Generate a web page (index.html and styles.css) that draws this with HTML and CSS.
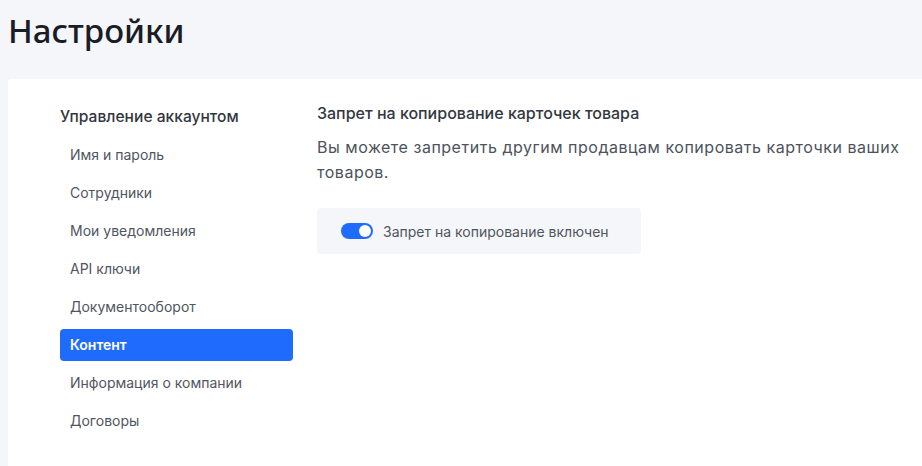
FILE: index.html
```html
<!DOCTYPE html>
<html lang="ru">
<head>
<meta charset="utf-8">
<link rel="stylesheet" href="styles.css">
</head>
<body>
<div class="page">
  <h1 class="title">Настройки</h1>
  <div class="card">
    <nav class="sidebar">
      <div class="group-title">Управление аккаунтом</div>
      <a class="nav-item">Имя и пароль</a>
      <a class="nav-item">Сотрудники</a>
      <a class="nav-item">Мои уведомления</a>
      <a class="nav-item">API ключи</a>
      <a class="nav-item">Документооборот</a>
      <a class="nav-item active">Контент</a>
      <a class="nav-item">Информация о компании</a>
      <a class="nav-item">Договоры</a>
    </nav>
    <section class="content">
      <h2 class="section-title">Запрет на копирование карточек товара</h2>
      <p class="desc">Вы можете запретить другим продавцам копировать карточки ваших товаров.</p>
      <div class="toggle-box">
        <span class="switch"><span class="knob"></span></span>
        <span class="toggle-label">Запрет на копирование включен</span>
      </div>
    </section>
  </div>
</div>
</body>
</html>
```

FILE: styles.css
```css
* { box-sizing: border-box; }
html, body {
  margin: 0;
  padding: 0;
  background: #f5f6fa;
  height: 100%;
  overflow: hidden;
}
body {
  font-family: Inter, "Noto Sans", sans-serif;
  color: #333740;
}
.page {
  padding: 0 0 0 8px;
}
.title {
  margin: 0;
  padding-top: 9px;
  height: 79px;
  font-family: "Noto Sans", Inter, sans-serif;
  font-weight: 500;
  font-size: 33px;
  line-height: 44px;
  color: #1a1d26;
  letter-spacing: 0;
}
.card {
  background: #fff;
  border-radius: 4px 0 0 0;
  display: flex;
  height: 387px;
  padding: 26px 0 0 52px;
}
.sidebar {
  width: 233px;
  flex: none;
  display: flex;
  flex-direction: column;
}
.group-title {
  font-size: 15.6px;
  font-weight: 500;
  color: #333740;
  line-height: 24px;
  margin-bottom: 10px;
}
.nav-item {
  display: block;
  height: 32px;
  line-height: 32px;
  padding-left: 10px;
  font-size: 14px;
  color: #50555f;
  margin-bottom: 6px;
  border-radius: 4px;
}
.nav-item.active {
  background: #1f6bfe;
  color: #fff;
  font-weight: 600;
}
.content {
  margin-left: 24px;
  margin-top: -2px;
}
.section-title {
  margin: 0;
  font-size: 16px;
  font-weight: 500;
  line-height: 20px;
  color: #333740;
}
.desc {
  margin: 12px 0 0;
  font-size: 16px;
  line-height: 25px;
  color: #4d525c;
  width: 590px;
  letter-spacing: 0.52px;
}
.toggle-box {
  margin-top: 23px;
  width: 324px;
  height: 46px;
  background: #f5f6fa;
  border-radius: 4px;
  display: flex;
  align-items: center;
  padding-left: 24px;
  gap: 10px;
}
.switch {
  width: 32px;
  height: 16px;
  border-radius: 8px;
  background: #1f6bfe;
  position: relative;
  flex: none;
}
.knob {
  position: absolute;
  right: 2px;
  top: 2px;
  width: 12px;
  height: 12px;
  border-radius: 50%;
  background: #fff;
}
.toggle-label {
  font-size: 14px;
  color: #50555f;
}
```
